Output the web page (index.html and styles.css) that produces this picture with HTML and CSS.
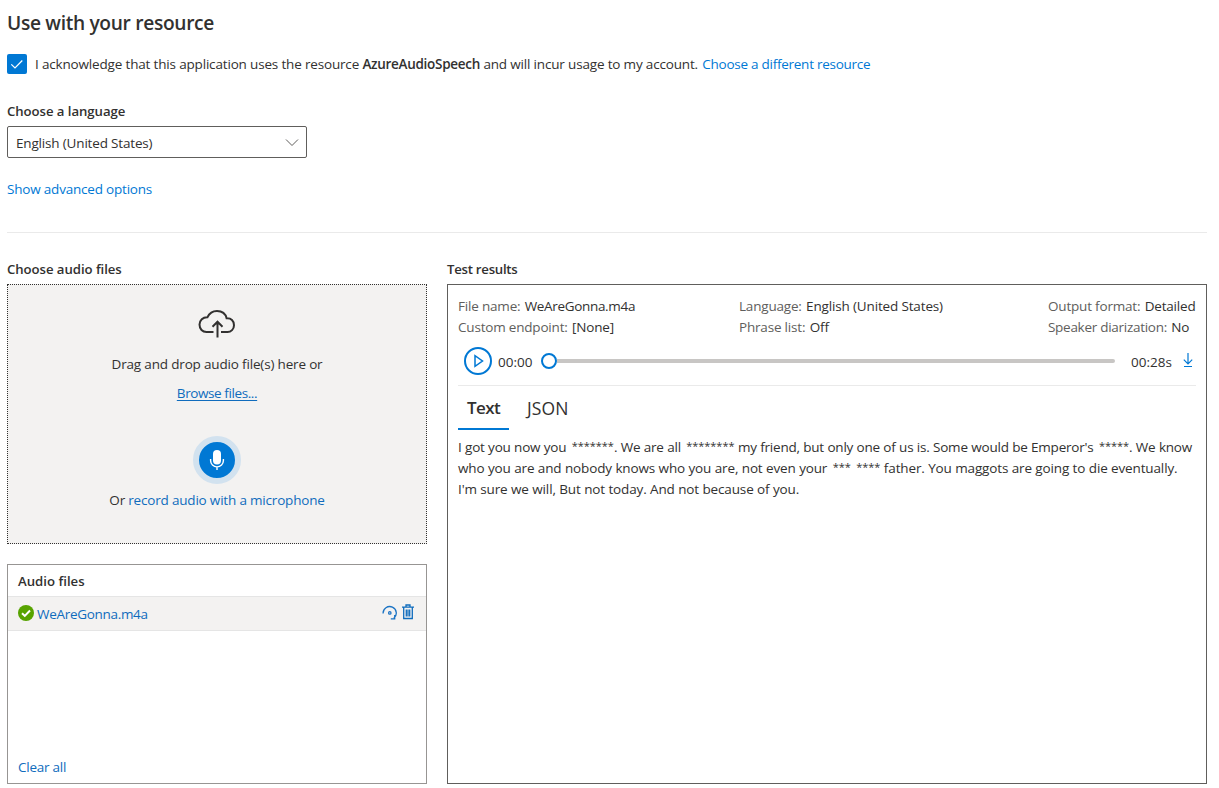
FILE: index.html
```html
<!DOCTYPE html>
<html lang="en">
<head>
<meta charset="utf-8">
<title>Speech to text</title>
<link rel="stylesheet" href="styles.css">
</head>
<body>
<main class="page">
  <h1 class="title">Use with your resource</h1>
  <div class="ack">
    <span class="checkbox"><svg width="20" height="20" viewBox="0 0 20 20"><path d="M4.300 10.300 8 14l7.300-7.500" fill="none" stroke="#fff" stroke-width="1.200"/></svg></span>
    <span class="ack-text">I acknowledge that this application uses the resource <b>AzureAudioSpeech</b> and will incur usage to my account. <a class="link choose">Choose a different resource</a></span>
  </div>
  <div class="label label-language">Choose a language</div>
  <div class="select"><span>English (United States)</span><svg width="14" height="10" viewBox="0 0 14 10"><path d="m1 1.500 6 6 6-6" fill="none" stroke="#605e5c"/></svg></div>
  <a class="link advanced">Show advanced options</a>
  <div class="columns">
    <section class="left">
      <div class="label label-audio">Choose audio files</div>
      <div class="drop">
        <svg class="cloud" width="38" height="30" viewBox="0 0 38 30" fill="none" stroke="#323130" stroke-width="2"><path d="M15.500 23H8.500C4.500 23 1.500 20 1.500 15.600c0-4.300 3.400-7.600 8-7.400C11.300 4.300 15 2 19 2c5 0 8.600 3 9.600 7.300 4.500-.300 7.400 2.500 7.400 6.900 0 4-3 6.800-6.500 6.800H23M19.500 28.500V13M14.500 17.700l5-5 5 5"/></svg>
        <div class="drop-text">Drag and drop audio file(s) here or</div>
        <a class="link2 browse">Browse files...</a>
        <div class="mic"><svg width="36" height="36" viewBox="0 0 36 36"><rect x="14" y="8" width="8" height="14.500" rx="4" fill="#fff"/><path d="M11.600 17v1.500a6.400 6.400 0 0 0 12.800 0V17M18 25v3" fill="none" stroke="#fff" stroke-width="1.400"/></svg></div>
        <div class="record">Or <a class="link2">record audio with a microphone</a></div>
      </div>
      <div class="files">
        <div class="files-head">Audio files</div>
        <div class="file-row">
          <svg class="ok" width="16" height="16" viewBox="0 0 16 16"><circle cx="8" cy="8" r="8" fill="#57a300"/><path d="m4 8.200 2.800 2.700L12 5.500" fill="none" stroke="#fff" stroke-width="2"/></svg>
          <a class="link2 file-name">WeAreGonna.m4a</a>
          <svg class="redo" width="16" height="16" viewBox="0 0 16 16" fill="none" stroke="#1a73c4" stroke-width="1.300"><path d="M1.100 8.500A6.600 6.600 0 1 1 11.800 13.300M8.800 13.800h3.900V9.900"/><circle cx="7.800" cy="7.900" r="1.200"/></svg>
          <svg class="trash" width="12" height="16" viewBox="0 0 12 16" fill="none" stroke="#0f6cbd" stroke-width="1.300"><path d="M0 3.200h12M4 3V1h4v2M1.700 3.500v11h8.600v-11M4.300 5.500v7M6 5.500v7M7.700 5.500v7"/></svg>
        </div>
        <a class="link2 clear">Clear all</a>
      </div>
    </section>
    <section class="right">
      <div class="label label-results">Test results</div>
      <div class="results">
        <div class="meta">
          <div class="meta-a"><div><i>File name:</i> <span class="meta-file">WeAreGonna.m4a</span></div><div><i>Custom endpoint:</i> [None]</div></div>
          <div class="meta-b"><div><i>Language:</i> English (United States)</div><div><i>Phrase list:</i> Off</div></div>
          <div class="meta-c"><div><i>Output format:</i> Detailed</div><div class="diarization"><i>Speaker diarization:</i> No</div></div>
        </div>
        <div class="player">
          <svg class="play" width="28" height="28" viewBox="0 0 28 28" fill="none" stroke="#0078d4" stroke-width="2"><circle cx="14" cy="14" r="13"/><path d="M11 8.700v10.600l7.500-5.300z" stroke-width="1.500"/></svg>
          <span class="time">00:00</span>
          <span class="thumb"></span><span class="track"></span>
          <span class="time total">00:28s</span>
          <svg class="download" width="10" height="16" viewBox="0 0 10 16" fill="none" stroke="#0078d4"><path d="M5 0v10.500M.800 6.700 5 10.900l4.200-4.200" stroke-width="1.200"/><path d="M1 13.500h8"/></svg>
        </div>
        <div class="tabs"><div class="tab active">Text</div><div class="tab json">JSON</div></div>
        <div class="transcript">
          <div class="first-line">I got you now you <span class="mask">*******</span>. We are all <span class="mask">********</span> my friend, but only one of us is. Some would be Emperor's <span class="mask">*****</span>. We know</div>
          <div>who you are and nobody knows who you are, not even your <span class="mask">***</span> <span class="mask">****</span> father. You maggots are going to die eventually.</div>
          <div>I'm sure we will, But not today. And not because of you.</div>
        </div>
      </div>
    </section>
  </div>
</main>
</body>
</html>
```
FILE: styles.css
```css
* { box-sizing: border-box; }
body { margin: 0; background: #fff; color: #323130; font: 13.5px/20px "Open Sans", "Noto Sans", sans-serif; letter-spacing: -0.17px; white-space: nowrap; overflow: hidden; }
svg { display: block; flex: none; }
.page { width: 1207px; height: 788px; padding: 9px 0 0 7px; }
.title { margin: 0; font-size: 19.2px; letter-spacing: -0.33px; line-height: 28px; font-weight: 600; }
.ack { display: flex; margin-top: 17px; height: 20px; gap: 8px; }
.ack-text { letter-spacing: -0.17px; }
.checkbox { width: 20px; height: 20px; background: #0078d4; border-radius: 2px; }
b { font-weight: 600; letter-spacing: -0.28px; }
.link { color: #0078d4; }
.link2 { color: #0f6cbd; }
.choose { margin-left: 1px; letter-spacing: -0.26px; }
.label { font-weight: 600; font-size: 13.2px; letter-spacing: -0.06px; height: 20px; }
.label-results { letter-spacing: -0.25px; }
.label-language { margin-top: 27px; }
.select { display: flex; justify-content: space-between; align-items: center; width: 300px; height: 32px; margin-top: 5px; padding: 2px 7px 0 8px; border: 1px solid #605e5c; border-radius: 2px; }
.advanced { display: block; margin-top: 21px; letter-spacing: -0.2px; }
.columns { display: flex; gap: 20px; margin-top: 33px; padding-top: 26px; border-top: 1px solid #eaeaea; }
.left { width: 420px; }
.right { width: 760px; }
.drop { display: flex; flex-direction: column; align-items: center; height: 260px; margin-top: 5px; padding-top: 24px; border: 1px dotted #323130; background: #f3f2f1; }
.drop-text { margin-top: 15px; }
.browse { margin-top: 9px; letter-spacing: -0.4px; text-decoration: underline; text-underline-offset: 2px; }
.mic { width: 48px; height: 48px; margin-top: 33px; border: 6px solid #d2e2ef; border-radius: 50%; background: #0078d4; }
.record { margin-top: 6px; letter-spacing: -0.19px; }
.files { display: flex; flex-direction: column; height: 220px; margin-top: 20px; border: 1px solid #979593; }
.files-head { height: 31px; padding: 6px 10px; font-weight: 600; font-size: 13.2px; letter-spacing: 0; }
.file-row { display: flex; align-items: center; height: 35px; padding: 0 12px 0 10px; border: solid #e5e5e5; border-width: 1px 0; background: #f3f2f1; }
.ok { margin-top: -1px; }
.file-name { margin: 0 auto 0 3px; letter-spacing: -0.3px; }
.redo { margin: -2px 4px 0 0; }
.trash { margin-top: -3px; }
.clear { margin: auto 0 6px 10px; letter-spacing: -0.25px; }
.results { height: 500px; margin-top: 5px; padding: 11px 10px; border: 1px solid #605e5c; }
.meta { display: grid; grid-template-columns: 281px 309px 1fr; line-height: 21px; }
.meta i { margin-right: 1px; font-style: normal; color: #605e5c; letter-spacing: -0.19px; }
.meta-file { letter-spacing: -0.33px; }
.meta-b { letter-spacing: -0.15px; }
.meta-c { letter-spacing: -0.18px; }
.diarization i { letter-spacing: -0.28px; }
.player { display: flex; align-items: center; height: 48px; padding: 0 3px 0 6px; border-bottom: 1px solid #eaeaea; }
.player > * { position: relative; top: -1px; }
.time { width: 35px; margin-left: 6px; padding-top: 2px; letter-spacing: 0; }
.thumb { width: 16px; height: 16px; margin-left: 8px; border: 2px solid #0078d4; border-radius: 50%; }
.track { flex: 1; height: 4px; border-radius: 0 2px 2px 0; background: #c8c6c4; }
.total { width: 42px; margin-left: 16px; margin-right: 10px; }
.tabs { display: flex; height: 44px; font-size: 17.5px; line-height: 42px; }
.tab { height: 44px; padding: 1px 9px; }
.active { width: 51px; font-size: 17px; font-weight: 600; letter-spacing: -0.55px; border-bottom: 2px solid #0078d4; }
.json { margin-left: 9px; letter-spacing: 0.1px; }
.transcript { margin-top: 7px; line-height: 21px; letter-spacing: -0.14px; }
.transcript > div { height: 21px; word-spacing: 0.12px; }
.transcript > .first-line { letter-spacing: -0.21px; word-spacing: 0.15px; }
.mask { margin: 0 0 0 2px; font-size: 11px; line-height: 0; letter-spacing: -0.04px; vertical-align: 2px; }
```
